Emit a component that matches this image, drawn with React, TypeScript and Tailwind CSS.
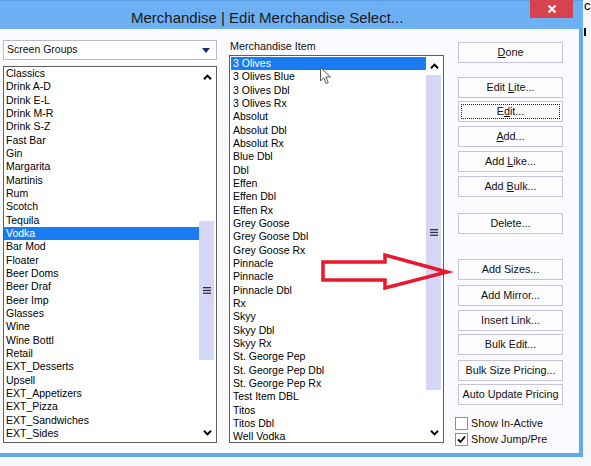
import React from "react";

const leftItems = [
  "Classics", "Drink A-D", "Drink E-L", "Drink M-R", "Drink S-Z", "Fast Bar", "Gin",
  "Margarita", "Martinis", "Rum", "Scotch", "Tequila", "Vodka", "Bar Mod", "Floater",
  "Beer Doms", "Beer Draf", "Beer Imp", "Glasses", "Wine", "Wine Bottl", "Retail",
  "EXT_Desserts", "Upsell", "EXT_Appetizers", "EXT_Pizza", "EXT_Sandwiches", "EXT_Sides",
];

const midItems = [
  "3 Olives", "3 Olives Blue", "3 Olives Dbl", "3 Olives Rx", "Absolut", "Absolut Dbl",
  "Absolut Rx", "Blue Dbl", "Dbl", "Effen", "Effen Dbl", "Effen Rx", "Grey Goose",
  "Grey Goose Dbl", "Grey Goose Rx", "Pinnacle", "Pinnacle", "Pinnacle Dbl", "Rx", "Skyy",
  "Skyy Dbl", "Skyy Rx", "St. George Pep", "St. George Pep Dbl", "St. George Pep Rx",
  "Test Item DBL", "Titos", "Titos Dbl", "Well Vodka",
];

function ChevronUp() {
  return (
    <svg width="9" height="6" viewBox="0 0 9 6">
      <path d="M1 5.2 L4.5 1.6 L8 5.2" fill="none" stroke="#000" strokeWidth="2" />
    </svg>
  );
}

function ChevronDown() {
  return (
    <svg width="9" height="6" viewBox="0 0 9 6">
      <path d="M1 0.8 L4.5 4.4 L8 0.8" fill="none" stroke="#000" strokeWidth="2" />
    </svg>
  );
}

function Grip() {
  return (
    <svg width="8" height="7" viewBox="0 0 8 7">
      <rect x="0" y="0" width="8" height="1.3" fill="#333" />
      <rect x="0" y="2.8" width="8" height="1.3" fill="#333" />
      <rect x="0" y="5.6" width="8" height="1.3" fill="#333" />
    </svg>
  );
}

interface ScrollProps {
  trackPad: string;
  thumbHeight: string;
}

function ScrollBar({ trackPad, thumbHeight }: ScrollProps) {
  return (
    <div className="flex w-[17px] flex-col">
      <div className="flex h-[17px] items-center justify-center pt-[3px]">
        <ChevronUp />
      </div>
      <div className={`flex-1 ${trackPad}`}>
        <div className={`flex w-[15px] items-center justify-center bg-[#d6d6f8] ${thumbHeight}`}>
          <Grip />
        </div>
      </div>
      <div className="flex h-[17px] items-center justify-center pb-[2px]">
        <ChevronDown />
      </div>
    </div>
  );
}

interface BtnProps {
  children: React.ReactNode;
  mt: string;
  focused?: boolean;
}

function Btn({ children, mt, focused }: BtnProps) {
  return (
    <div
      className={`relative flex h-[21px] w-[105px] items-center justify-center border border-[#c3c4da] bg-[#fdfdff] text-[10.8px] text-[#111] ${mt}`}
    >
      {focused && <span className="absolute inset-[2px] border border-dotted border-[#222]" />}
      <span>{children}</span>
    </div>
  );
}

function Check({ checked }: { checked?: boolean }) {
  return (
    <div className="flex h-[13px] w-[13px] items-center justify-center border border-[#8e8f8f] bg-white">
      {checked && (
        <svg width="9" height="9" viewBox="0 0 9 9">
          <path d="M1 4.5 L3.5 7 L8 1.5" fill="none" stroke="#000" strokeWidth="1.8" />
        </svg>
      )}
    </div>
  );
}

export default function App() {
  return (
    <div className="relative h-[466px] w-[591px] overflow-hidden bg-[#f6f7fb] font-['Liberation_Sans',Arial,sans-serif]">
      <div className="flex h-[457px] w-[583px] flex-col">
        {/* Title bar */}
        <div className="flex h-[29px] items-start border-t border-[#5a9fe6] bg-[#6db1f4]">
          <div className="pl-[131px] pt-[9px] text-[15px] leading-[16px] text-[#1b1b1b]">
            Merchandise | Edit Merchandise Select...
          </div>
          <div className="ml-auto mr-[10px] -mt-px flex h-[18px] w-[43px] items-center justify-center bg-[#d6434f]">
            <svg width="10" height="10" viewBox="0 0 10 10">
              <path d="M1.5 1.5 L8.5 8.5 M8.5 1.5 L1.5 8.5" stroke="#fff" strokeWidth="2" />
            </svg>
          </div>
        </div>

        {/* Body */}
        <div className="flex flex-1 items-start border-b-4 border-r-4 border-[#62a9f0] bg-[#fbfbff] pl-[3px] pt-[11px]">
          {/* Left column */}
          <div className="flex w-[214px] flex-col">
            <div className="flex h-[20px] items-center justify-between border border-[#b9bacb] bg-white pl-[3px] pr-[6px] text-[10.5px] text-[#111]">
              <span>Screen Groups</span>
              <svg width="8" height="5" viewBox="0 0 8 5">
                <path d="M0 0 L8 0 L4 5 Z" fill="#1c2a7a" />
              </svg>
            </div>
            <div className="mt-[6px] flex h-[377px] overflow-hidden border border-[#5f5f58] bg-white">
              <div className="flex-1 overflow-hidden text-[10.5px] leading-[13.33px] text-black">
                {leftItems.map((it, i) => (
                  <div
                    key={i}
                    className={
                      it === "Vodka"
                        ? "h-[13.33px] bg-[#1a7cf2] pl-[2px] text-white"
                        : "h-[13.33px] pl-[2px]"
                    }
                  >
                    {it}
                  </div>
                ))}
              </div>
              <ScrollBar trackPad="pt-[137px]" thumbHeight="h-[139px]" />
            </div>
          </div>

          {/* Middle column */}
          <div className="ml-[12px] flex w-[215px] flex-col">
            <div className="h-[15px] pl-[1px] text-[10.8px] leading-[13px] text-[#111]">Merchandise Item</div>
            <div className="flex h-[388px] overflow-hidden border border-[#5f5f58] bg-white">
              <div className="flex-1 overflow-hidden pt-px text-[10.5px] leading-[13.33px] text-black">
                {midItems.map((it, i) => (
                  <div
                    key={i}
                    className={
                      i === 0
                        ? "ml-px h-[13.33px] bg-[#1a7cf2] pl-[2px] text-white"
                        : "ml-px h-[13.33px] pl-[2px]"
                    }
                  >
                    {it}
                  </div>
                ))}
              </div>
              <ScrollBar trackPad="pt-[2px]" thumbHeight="h-[315px]" />
            </div>
          </div>

          {/* Right column */}
          <div className="ml-[14px] flex w-[105px] flex-col">
            <Btn mt="mt-[2px]">
              <u>D</u>one
            </Btn>
            <Btn mt="mt-[14px]">
              Edit <u>L</u>ite...
            </Btn>
            <Btn mt="mt-[3px]" focused>
              E<u>d</u>it...
            </Btn>
            <Btn mt="mt-[4px]">
              <u>A</u>dd...
            </Btn>
            <Btn mt="mt-[4px]">
              Add <u>L</u>ike...
            </Btn>
            <Btn mt="mt-[4px]">
              Add <u>B</u>ulk...
            </Btn>
            <Btn mt="mt-[16px]">Delete...</Btn>
            <Btn mt="mt-[25px]">Add Sizes...</Btn>
            <Btn mt="mt-[5px]">Add Mirror...</Btn>
            <Btn mt="mt-[4px]">Insert Link...</Btn>
            <Btn mt="mt-[3px]">Bulk Edit...</Btn>
            <Btn mt="mt-[5px]">Bulk Size Pricing...</Btn>
            <Btn mt="mt-[3px]">Auto Update Pricing</Btn>
            <div className="-ml-[3px] mt-[12px] flex items-center gap-[3px] text-[10.8px] leading-[13px] text-[#111]">
              <Check />
              <span>Show In-Active</span>
            </div>
            <div className="-ml-[3px] mt-[3px] flex items-center gap-[3px] text-[10.8px] leading-[13px] text-[#111]">
              <Check checked />
              <span>Show Jump/Pre</span>
            </div>
          </div>
        </div>
      </div>

      {/* bits of the window behind */}
      <span className="absolute left-[584px] top-[-4px] text-[13px] text-black">c</span>
      <span className="absolute left-[584px] top-[28px] h-[8px] w-[2px] bg-black" />

      {/* red annotation arrow */}
      <svg className="absolute left-[318px] top-[250px]" width="135" height="44" viewBox="0 0 135 44">
        <path
          d="M5 12 L67 12 L67 5 L129 22 L67 38 L67 30 L5 30 Z"
          fill="none"
          stroke="#e8192c"
          strokeWidth="3.5"
          strokeLinejoin="miter"
        />
      </svg>

      {/* mouse pointer */}
      <svg className="absolute left-[320px] top-[67px]" width="12" height="18" viewBox="0 0 12 18">
        <path
          d="M0.5 0.5 L0.5 14 L3.8 10.8 L6.2 16.5 L8.2 15.6 L5.9 10 L10.5 10 Z"
          fill="#fff"
          stroke="#555"
          strokeWidth="1"
        />
      </svg>
    </div>
  );
}
